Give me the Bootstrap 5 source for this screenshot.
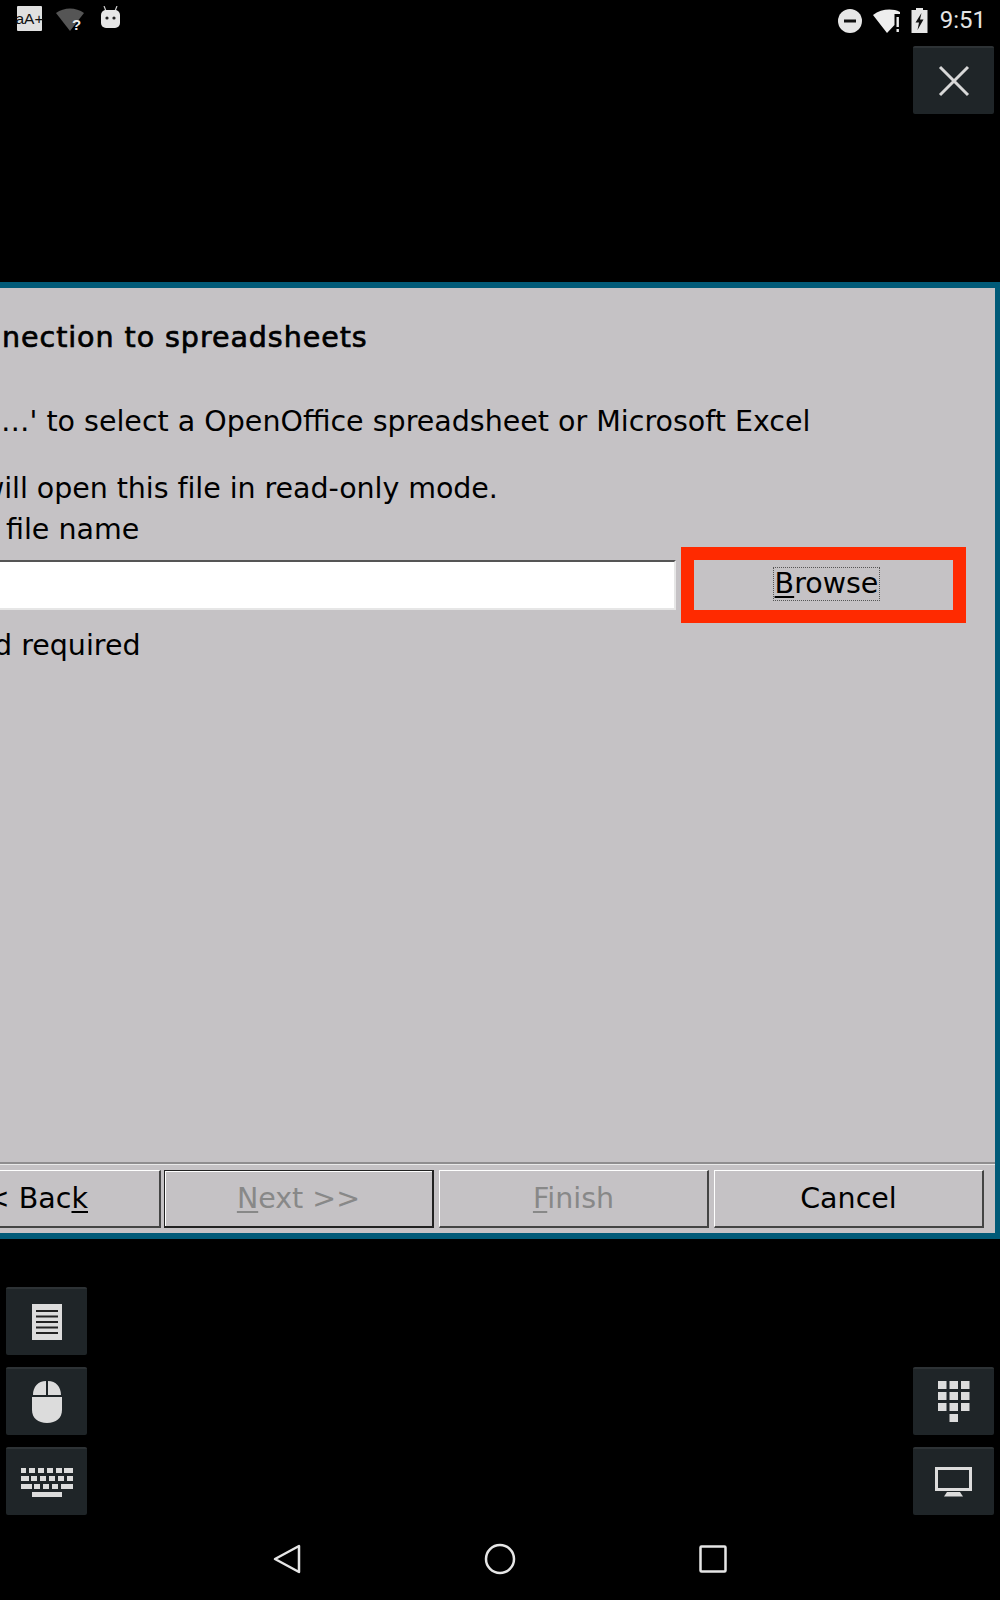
<!DOCTYPE html>
<html lang="en">
  <head>
    <meta charset="utf-8" />
    <meta name="viewport" content="width=device-width, initial-scale=1" />
    <title>Connection to spreadsheets</title>
    <link
      href="https://cdn.jsdelivr.net/npm/bootstrap@5.3.3/dist/css/bootstrap.min.css"
      rel="stylesheet"
    />
    <style>
      body {
        background: #000;
        width: 1000px;
        height: 1600px;
        overflow: hidden;
        font-family: "DejaVu Sans", sans-serif;
      }

      /* android status bar */
      .status-bar {
        height: 46px;
        padding: 6px 14px 0 17px;
      }
      .aa-icon {
        width: 25px;
        height: 25px;
        background: #e0e0e0;
        border-radius: 1px;
        color: #111;
        font: 15.5px/25px "Liberation Sans", sans-serif;
        text-align: center;
        margin-right: 14px;
        white-space: nowrap;
        display: flex;
        justify-content: center;
      }
      .android-head {
        margin-left: -2px;
      }
      .dnd-icon {
        margin-right: 10px;
      }
      .wifi-warn {
        margin-right: 1px;
      }
      .clock {
        font: 400 24px/28px Roboto, sans-serif;
        color: #e4e4e4;
        margin-left: 12px;
      }

      .top-area {
        height: 236px;
        padding-right: 6px;
      }

      /* dark overlay buttons */
      .tool-btn {
        width: 81px;
        height: 68px;
        background: #1f2528;
        border-top: 2px solid #2d3235;
        border-radius: 2px;
      }

      /* libreoffice dialog */
      .wizard {
        height: 957px;
        background: #c5c2c5;
        border-top: 6px solid #005a78;
        border-right: 5px solid #005a78;
        border-bottom: 6px solid #005a78;
        color: #000;
        font-size: 28.5px;
        line-height: 40px;
        overflow: hidden;
        white-space: nowrap;
      }
      .wizard u {
        text-underline-offset: 3px;
        text-decoration-thickness: 1.5px;
      }
      .wiz-title {
        font-size: 28.5px;
        letter-spacing: 0.95px;
        -webkit-text-stroke: 0.7px #000;
        margin: 30px 0 0 -17px;
      }
      .wiz-line1 {
        margin: 44px 0 0 1px;
      }
      .wiz-line2 {
        margin: 27px 0 0 -19px;
        letter-spacing: -0.06px;
      }
      .wiz-line3 {
        margin: 1px 0 0 6px;
      }
      .wiz-input {
        width: 676px;
        height: 50px;
        background: #fff;
        border-top: 2px solid #555;
        border-right: 2px solid #e6e6e6;
        border-bottom: 2px solid #e6e6e6;
      }
      .field-row {
        margin-top: -3px;
        height: 76px;
      }
      .browse-box {
        width: 285px;
        height: 76px;
        margin-left: 5px;
        border: 13px solid #ff2a00;
        border-radius: 0;
      }
      .browse-label {
        border: 1px dotted #555;
        line-height: 32px;
        padding: 0 1px;
        margin: -2px 0 0 6px;
      }
      .wiz-line4 {
        margin: 3px 0 0 -6px;
      }
      .wiz-sep {
        height: 2px;
        background: #8f8d8f;
        border-bottom: 1px solid #e8e8e8;
        box-sizing: content-box;
      }
      .wiz-buttons {
        padding: 5px 11px 0 0;
        gap: 5px;
      }
      .wiz-btn {
        width: 270px;
        height: 58px;
        padding: 0;
        flex-shrink: 0;
        background: #c5c2c5;
        color: #000;
        font-size: 28.5px;
        line-height: 52px;
        border-width: 1px 2px 2px 1px;
        border-style: solid;
        border-color: #fff #444 #444 #fff;
        border-radius: 0;
      }
      .wiz-btn:disabled {
        color: #888;
        background: #c5c2c5;
        opacity: 1;
        border-color: #fff #444 #444 #fff;
      }
      .wiz-btn.btn-back {
        width: 240px;
        margin-right: -2px;
        text-align: right;
        padding-right: 71px;
      }
      .wiz-btn.btn-next:disabled {
        border: 1px solid #222;
        border-width: 1px 2px 2px 1px;
        box-shadow: inset 1px 1px 0 #fff;
      }

      .bottom-area {
        height: 275px;
        padding: 48px 6px 0 6px;
      }
      .tool-col {
        gap: 12px;
      }

      .nav-bar {
        height: 32px;
        margin-top: 29px;
        padding: 0 273px;
      }
    </style>
  </head>
  <body>
    <div class="status-bar d-flex align-items-start">
      <div class="aa-icon">aA+</div>
      <svg width="30" height="26" viewBox="0 0 30 26" class="me-3">
        <path d="M0 7 C8 1 20 1 28 7 L14 25 Z" fill="#555" />
        <text x="16" y="24" font-size="15" font-weight="700" fill="#eee" font-family="Liberation Sans">?</text>
      </svg>
      <svg width="22" height="24" viewBox="0 0 22 24" class="android-head">
        <path d="M4 0 L6 5 M17 0 L15 5" stroke="#ccc" stroke-width="1.2" />
        <rect x="1" y="4" width="19" height="18" rx="5" fill="#e6e6e6" />
        <circle cx="7" cy="12" r="1.6" fill="#222" />
        <circle cx="14" cy="12" r="1.6" fill="#222" />
      </svg>
      <div class="ms-auto d-flex align-items-center">
        <svg width="24" height="26" viewBox="0 0 24 26" class="dnd-icon">
          <circle cx="12" cy="14" r="12" fill="#e6e6e6" />
          <rect x="6" y="12.500" width="12" height="3" fill="#111" />
        </svg>
        <svg width="30" height="26" viewBox="0 0 30 26" class="wifi-warn">
          <path d="M1 8 C9 2 20 1 28 5 L28 7 L22.500 7 L22.500 18 L15 26 Z" fill="#eee" />
          <rect x="24.500" y="10" width="2.400" height="10" fill="#eee" />
          <rect x="24.500" y="22" width="2.400" height="3" fill="#eee" />
        </svg>
        <svg width="17" height="26" viewBox="0 0 17 26" class="ms-2">
          <path d="M5 1 H12 V3 H16.500 V26 H0.500 V3 H5 Z" fill="#e6e6e6" />
          <path d="M10.500 6 L4.500 15.500 H8 L6.500 23 L12.500 12.500 H9 Z" fill="#111" />
        </svg>
        <div class="clock">9:51</div>
      </div>
    </div>

    <div class="top-area d-flex justify-content-end align-items-start">
      <div class="tool-btn d-flex align-items-center justify-content-center">
        <svg width="32" height="32" viewBox="0 0 32 32">
          <path d="M2 2 L30 30 M30 2 L2 30" stroke="#d8d8d8" stroke-width="3" />
        </svg>
      </div>
    </div>

    <div class="wizard d-flex flex-column">
      <div class="wiz-title">nnection to spreadsheets</div>
      <div class="wiz-line1">…' to select a OpenOffice spreadsheet or Microsoft Excel</div>
      <div class="wiz-line2">will open this file in read-only mode.</div>
      <div class="wiz-line3">file name</div>
      <div class="field-row d-flex align-items-center">
        <div class="wiz-input"></div>
        <div class="browse-box d-flex align-items-center justify-content-center">
          <span class="browse-label"><u>B</u>rowse</span>
        </div>
      </div>
      <div class="wiz-line4">d required</div>
      <div class="flex-grow-1"></div>
      <div class="wiz-sep"></div>
      <div class="wiz-buttons d-flex justify-content-end">
        <button class="btn wiz-btn btn-back">&lt; Bac<u>k</u></button>
        <button class="btn wiz-btn btn-next" disabled><u>N</u>ext &gt;&gt;</button>
        <button class="btn wiz-btn" disabled><u>F</u>inish</button>
        <button class="btn wiz-btn">Cancel</button>
      </div>
      <div style="height: 5px"></div>
    </div>

    <div class="bottom-area d-flex justify-content-between align-items-start">
      <div class="tool-col d-flex flex-column">
        <div class="tool-btn d-flex align-items-center justify-content-center">
          <svg width="30" height="36" viewBox="0 0 30 36">
            <rect width="30" height="36" fill="#dcdcdc" />
            <path d="M4 7 H26 M4 12.500 H26 M4 18 H26 M4 23.500 H26 M4 29 H26" stroke="#222" stroke-width="2" />
          </svg>
        </div>
        <div class="tool-btn d-flex align-items-center justify-content-center">
          <svg width="30" height="44" viewBox="0 0 30 44">
            <path d="M14 1 C6 1 1 7 1 15 H14 Z M16 1 C24 1 29 7 29 15 H16 Z" fill="#dcdcdc" />
            <path d="M0 17 H30 V30 C30 38 24 43 15 43 C6 43 0 38 0 30 Z" fill="#dcdcdc" />
          </svg>
        </div>
        <div class="tool-btn d-flex align-items-center justify-content-center">
          <svg width="54" height="30" viewBox="0 0 54 30">
            <g fill="#dcdcdc">
              <rect x="1" y="1" width="5" height="5" /><rect x="9" y="1" width="6" height="5" /><rect x="18" y="1" width="6" height="5" /><rect x="27" y="1" width="6" height="5" /><rect x="36" y="1" width="6" height="5" /><rect x="44" y="1" width="9" height="5" />
              <rect x="1" y="9" width="8" height="5" /><rect x="11" y="9" width="6" height="5" /><rect x="20" y="9" width="6" height="5" /><rect x="29" y="9" width="6" height="5" /><rect x="38" y="9" width="6" height="5" /><rect x="47" y="9" width="6" height="5" />
              <rect x="1" y="17" width="11" height="5" /><rect x="14" y="17" width="6" height="5" /><rect x="23" y="17" width="6" height="5" /><rect x="32" y="17" width="6" height="5" /><rect x="41" y="17" width="12" height="5" />
              <rect x="12" y="25" width="30" height="5" />
            </g>
          </svg>
        </div>
      </div>
      <div class="tool-col d-flex flex-column" style="margin-top: 80px">
        <div class="tool-btn d-flex align-items-center justify-content-center">
          <svg width="32" height="42" viewBox="0 0 32 42" fill="#dcdcdc">
            <rect x="0" y="0" width="8.500" height="8" /><rect x="11.500" y="0" width="8.500" height="8" /><rect x="23" y="0" width="8.500" height="8" />
            <rect x="0" y="11" width="8.500" height="8" /><rect x="11.500" y="11" width="8.500" height="8" /><rect x="23" y="11" width="8.500" height="8" />
            <rect x="0" y="22" width="8.500" height="8" /><rect x="11.500" y="22" width="8.500" height="8" /><rect x="23" y="22" width="8.500" height="8" />
            <rect x="11.500" y="33" width="8.500" height="8" />
          </svg>
        </div>
        <div class="tool-btn d-flex align-items-center justify-content-center">
          <svg width="37" height="30" viewBox="0 0 37 30">
            <rect x="1.500" y="1.500" width="34" height="21" fill="none" stroke="#dcdcdc" stroke-width="3" />
            <path d="M9 29.500 L12 25 H25 L28 29.500 Z" fill="#dcdcdc" />
          </svg>
        </div>
      </div>
    </div>

    <div class="nav-bar d-flex justify-content-between align-items-center">
      <svg width="28" height="32" viewBox="0 0 28 32">
        <path d="M26 3 V29 L2 16 Z" fill="none" stroke="#e6e6e6" stroke-width="2.500" stroke-linejoin="round" />
      </svg>
      <svg width="32" height="32" viewBox="0 0 32 32">
        <circle cx="16" cy="16" r="14" fill="none" stroke="#e6e6e6" stroke-width="2.500" />
      </svg>
      <svg width="28" height="28" viewBox="0 0 28 28">
        <rect x="1.500" y="1.500" width="25" height="25" rx="1" fill="none" stroke="#e6e6e6" stroke-width="2.500" />
      </svg>
    </div>

    <script src="https://cdn.jsdelivr.net/npm/bootstrap@5.3.3/dist/js/bootstrap.bundle.min.js"></script>
  </body>
</html>
